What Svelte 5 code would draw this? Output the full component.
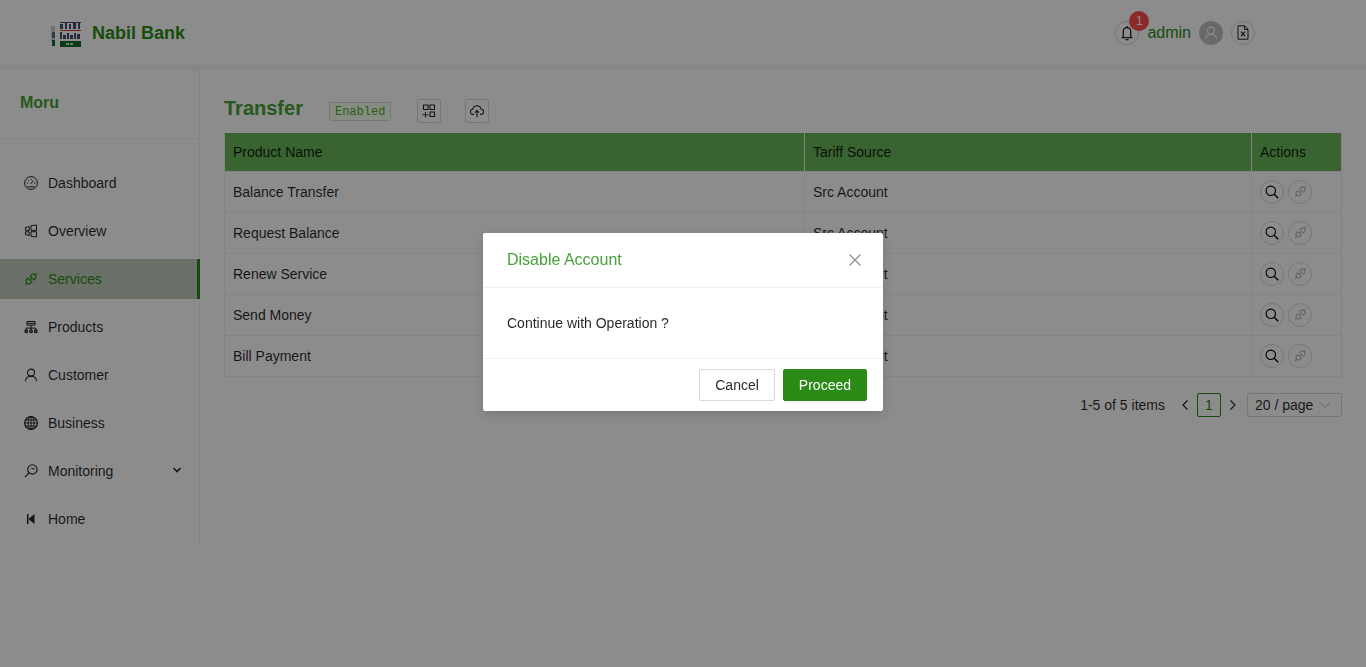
<script>
	const rows = [
		['Balance Transfer', 'Src Account'],
		['Request Balance', 'Src Account'],
		['Renew Service', 'Src Account'],
		['Send Money', 'Src Account'],
		['Bill Payment', 'Src Account']
	];

	const menu = [
		{ label: 'Dashboard', icon: 'dashboard' },
		{ label: 'Overview', icon: 'overview' },
		{ label: 'Services', icon: 'api', active: true },
		{ label: 'Products', icon: 'cluster' },
		{ label: 'Customer', icon: 'user' },
		{ label: 'Business', icon: 'globe' },
		{ label: 'Monitoring', icon: 'monitor', caret: true },
		{ label: 'Home', icon: 'home' }
	];
</script>

{#snippet api(size)}
	<svg width={size} height={size} viewBox="0 0 14 14" fill="none" stroke="currentColor" stroke-width="1.1">
		<g transform="rotate(45 7 7)">
			<path d="M7 -1.400V1.400M7 12.600V15.400M7 5.400V8.600" />
			<path d="M4.200 5.400V4.200a2.800 2.800 0 0 1 5.600 0v1.200z" />
			<path d="M4.200 8.600v1.200a2.800 2.800 0 0 0 5.600 0V8.600z" />
		</g>
	</svg>
{/snippet}

{#snippet search()}
	<svg width="14" height="14" viewBox="0 0 14 14" fill="none" stroke="#000" stroke-width="1.1">
		<circle cx="5.800" cy="5.800" r="4.700" />
		<path d="m9.200 9.200 4 4" stroke-width="1.300" />
	</svg>
{/snippet}

{#snippet icon(name)}
	{#if name === 'dashboard'}
		<svg width="14" height="14" viewBox="0 0 14 14" fill="none" stroke="currentColor" stroke-width="1">
			<circle cx="7" cy="7" r="6.400" />
			<path d="M3.400 10.800h7.200M6.600 8l2.600-3.400M2.800 7h1.300M9.900 7h1.300M7 2.800v1.300M4 4l.9.900" />
		</svg>
	{:else if name === 'overview'}
		<svg width="14" height="14" viewBox="0 0 14 14" fill="none" stroke="currentColor" stroke-width="1">
			<path d="M1.500 3.400 5.200 2.600v3.800H1.500zM1.500 7.800h3.700v3.600l-3.700-.8zM7 1.700l5.500-.7v5.300H7zM7 7.700h5.500v5.300L7 12.300z" />
		</svg>
	{:else if name === 'api'}
		{@render api(14)}
	{:else if name === 'cluster'}
		<svg width="14" height="14" viewBox="0 0 14 14" fill="none" stroke="currentColor" stroke-width="1">
			<path d="M3 1.500h8v3.600H3zM3 3.300h8M7 5.100v3M2.200 10V8.100h9.600V10M7 8.100V10" />
			<path d="M1 10h2.400v2.600H1zM5.800 10h2.400v2.600H5.800zM10.600 10H13v2.600h-2.400z" fill="currentColor" fill-opacity=".5" />
		</svg>
	{:else if name === 'user'}
		<svg width="14" height="14" viewBox="0 0 14 14" fill="none" stroke="currentColor" stroke-width="1.1">
			<circle cx="7" cy="4.600" r="3.500" />
			<path d="M1.400 13.200c.2-3 2.600-5.100 5.600-5.100s5.400 2.100 5.600 5.100" />
		</svg>
	{:else if name === 'globe'}
		<svg width="14" height="14" viewBox="0 0 14 14" fill="none" stroke="currentColor" stroke-width=".9">
			<circle cx="7" cy="7" r="6.400" stroke-width="1.200" />
			<ellipse cx="7" cy="7" rx="3" ry="6.400" />
			<path d="M7 .6v12.800M.6 7h12.800M1.400 4h11.200M1.400 10h11.200" />
		</svg>
	{:else if name === 'monitor'}
		<svg width="14" height="14" viewBox="0 0 14 14" fill="none" stroke="currentColor" stroke-width="1.100">
			<circle cx="8.400" cy="5.400" r="4.700" />
			<path d="M5 8.800 1 13M7.400 4l3 1.200" />
		</svg>
	{:else if name === 'home'}
		<svg width="14" height="14" viewBox="0 0 14 14" fill="currentColor">
			<path d="M3 2h1.500v10H3zM10.500 2v10L4.500 7z" />
		</svg>
	{/if}
{/snippet}

<div class="page">
	<header class="topbar">
		<div class="brand">
			<svg width="30" height="28" viewBox="0 0 30 28">
				<rect x="1" y="12" width="3" height="6" fill="#0c2c66" />
				<rect x="0" y="6" width="4" height="15" fill="#9aa0a8" opacity=".5" />
				<rect x="1" y="20" width="3" height="6" fill="#0e6b2a" />
				<path d="M9 2h21v1H9zM9 4h3v5H9zM14 3h2v6h-2zM18 4h2v5h-2zM22 3h3v6h-3zM27 3h2v6h-2z" fill="#16264f" opacity=".8" />
				<rect x="9" y="10" width="21" height="1" fill="#d2433a" />
				<path d="M9 12h2v7H9zM12 15h3v4h-3zM16 13h2v6h-2zM19 15h3v4h-3zM23 13h2v6h-2zM26 14h3v5h-3z" fill="#16264f" opacity=".8" />
				<rect x="9" y="21" width="21" height="6" fill="#0c6a2a" />
				<path d="M15 23h3v2h-3zM19 23h3v2h-3z" fill="#cfe3d4" />
			</svg>
			<span class="brand-name">Nabil Bank</span>
		</div>
		<div class="user">
			<span class="round">
				<svg width="14" height="16" viewBox="0 0 14 16" fill="none" stroke="#000" stroke-width="1.100">
					<path d="M1.500 12.800h11M3.200 12.800V6.400a3.800 3.800 0 0 1 7.600 0v6.400M7 1v1.400M5.400 14.800h3.200" />
				</svg>
				<span class="badge">1</span>
			</span>
			<span class="user-name">admin</span>
			<span class="avatar">
				<svg width="14" height="14" viewBox="0 0 14 14" fill="none" stroke="currentColor" stroke-width="1.100">
					<circle cx="7" cy="4.600" r="3.500" />
					<path d="M1.400 13.200c.2-3 2.600-5.100 5.600-5.100s5.400 2.100 5.600 5.100" />
				</svg>
			</span>
			<span class="round">
				<svg width="12" height="15" viewBox="0 0 12 15" fill="none" stroke="currentColor" stroke-width="1">
					<path d="M1 .8h6.600L11 4.200v10H1zM7.400.8v3.600H11" />
					<path d="m4 6.600 4 4.600m0-4.600-4 4.600" stroke-width="1.200" />
				</svg>
			</span>
		</div>
	</header>

	<div class="layout">
		<aside class="sidebar">
			<div class="side-title">Moru</div>
			<nav class="menu">
				{#each menu as item}
					<div class="menu-item" class:active={item.active}>
						<span class="menu-icon">{@render icon(item.icon)}</span>
						<span class="menu-label">{item.label}</span>
						{#if item.caret}
							<svg class="caret" width="10" height="10" viewBox="0 0 10 10" fill="none" stroke="currentColor" stroke-width="1.600">
								<path d="m1.500 3 3.500 3.500L8.500 3" />
							</svg>
						{/if}
					</div>
				{/each}
			</nav>
		</aside>

		<main class="content">
			<div class="title-row">
				<h1>Transfer</h1>
				<span class="tag">Enabled</span>
				<span class="square first">
					<svg width="14" height="14" viewBox="0 0 14 14" fill="none" stroke="currentColor" stroke-width="1.100">
						<path d="M1.500 1h4.500v4.500H1.500zM8 1h4.500v4.500H8zM8 8h4.500v4.500H8zM3.500 8v5.500M.5 10.800h6" />
					</svg>
				</span>
				<span class="square">
					<svg width="14" height="14" viewBox="0 0 14 14" fill="none" stroke="currentColor" stroke-width="1.100">
						<path d="M4 10.400H3.200A2.600 2.600 0 0 1 2.800 5.200 4.300 4.300 0 0 1 11.200 5.200 2.600 2.600 0 0 1 10.800 10.400H10" />
						<path d="M7 13V6.800M5 8.600l2-2 2 2" />
					</svg>
				</span>
			</div>

			<table>
				<thead>
					<tr>
						<th class="col-name">Product Name</th>
						<th class="col-src">Tariff Source</th>
						<th>Actions</th>
					</tr>
				</thead>
				<tbody>
					{#each rows as [name, source]}
						<tr>
							<td>{name}</td>
							<td>{source}</td>
							<td>
								<div class="actions">
									<span class="round">{@render search()}</span>
									<span class="round muted">{@render api(13)}</span>
								</div>
							</td>
						</tr>
					{/each}
				</tbody>
			</table>

			<div class="pager">
				<span class="total">1-5 of 5 items</span>
				<svg class="arrow" width="8" height="12" viewBox="0 0 8 12" fill="none" stroke="currentColor" stroke-width="1.200">
					<path d="M6.500 1.500 2 6l4.500 4.500" />
				</svg>
				<span class="page-no">1</span>
				<svg class="arrow" width="8" height="12" viewBox="0 0 8 12" fill="none" stroke="currentColor" stroke-width="1.200">
					<path d="M1.500 1.500 6 6l-4.500 4.500" />
				</svg>
				<span class="size">
					20 / page
					<svg width="12" height="8" viewBox="0 0 12 8" fill="none" stroke="#bfbfbf" stroke-width="1">
						<path d="m1 1.500 5 5 5-5" />
					</svg>
				</span>
			</div>
		</main>
	</div>
</div>

<div class="mask">
	<div class="modal">
		<div class="modal-head">
			<span class="modal-title">Disable Account</span>
			<svg width="14" height="14" viewBox="0 0 14 14" fill="none" stroke="#8c8c8c" stroke-width="1.100">
				<path d="m1.500 1.500 11 11m0-11-11 11" />
			</svg>
		</div>
		<div class="modal-body">Continue with Operation ?</div>
		<div class="modal-foot">
			<button class="btn">Cancel</button>
			<button class="btn primary">Proceed</button>
		</div>
	</div>
</div>

<style>
	:global(body) {
		margin: 0;
		background: #fff;
		font-family: "Liberation Sans", Arial, sans-serif;
		font-size: 14px;
		color: rgba(0, 0, 0, 0.85);
	}

	.page {
		height: 667px;
		overflow: hidden;
	}

	/* TOP BAR */
	.topbar {
		box-sizing: border-box;
		height: 70px;
		display: flex;
		align-items: center;
		justify-content: space-between;
		padding: 0 111px 0 51px;
		border-bottom: 5px solid #f0f2f5;
	}

	.brand {
		display: flex;
		align-items: center;
		gap: 11px;
		padding-top: 2px;
	}

	.brand-name {
		font-size: 18px;
		font-weight: 700;
		color: #2a8c17;
	}

	.user {
		display: flex;
		align-items: center;
		gap: 8px;
		font-size: 16px;
	}

	.user-name {
		color: #2a8c17;
	}

	.round {
		position: relative;
		box-sizing: border-box;
		width: 24px;
		height: 24px;
		display: flex;
		align-items: center;
		justify-content: center;
		border: 1px solid #d9d9d9;
		border-radius: 50%;
		color: rgba(0, 0, 0, 0.85);
		background: #fff;
	}

	.badge {
		position: absolute;
		top: -11px;
		left: 13px;
		width: 20px;
		height: 20px;
		border-radius: 50%;
		background: #ff4d4f;
		color: #fff;
		font-size: 12px;
		line-height: 20px;
		text-align: center;
	}

	.avatar {
		width: 24px;
		height: 24px;
		display: flex;
		align-items: center;
		justify-content: center;
		border-radius: 50%;
		background: #bfbfbf;
		color: #fff;
	}

	/* SIDEBAR */
	.layout {
		display: flex;
		align-items: flex-start;
	}

	.sidebar {
		box-sizing: border-box;
		width: 200px;
		height: 475px;
		flex-shrink: 0;
		border-right: 1px solid #f0f0f0;
	}

	.side-title {
		box-sizing: border-box;
		height: 69px;
		padding: 24px 20px 0;
		font-size: 16px;
		font-weight: 700;
		color: #47a138;
		border-bottom: 1px solid #f0f0f0;
	}

	.menu {
		display: flex;
		flex-direction: column;
		gap: 8px;
		padding-top: 24px;
		margin-right: -1px;
	}

	.menu-item {
		box-sizing: border-box;
		height: 40px;
		display: flex;
		align-items: center;
		gap: 10px;
		padding-left: 24px;
	}

	.menu-icon {
		display: flex;
		width: 14px;
	}

	.menu-label {
		flex: 1;
	}

	.caret {
		margin: -3px 18px 0 0;
	}

	.menu-item.active {
		background: #c1cdbd;
		color: #2a8c17;
		border-right: 3px solid #2a8c17;
	}

	/* CONTENT */
	.content {
		flex: 1;
		padding: 26px 24px 0;
		min-width: 0;
	}

	.title-row {
		height: 37px;
		display: flex;
		align-items: flex-start;
	}

	h1 {
		margin: 1px 26px 0 0;
		font-size: 20px;
		line-height: 23px;
		font-weight: 700;
		color: #47a138;
	}

	.tag {
		box-sizing: border-box;
		height: 19px;
		margin: 6px 26px 0 0;
		padding: 1px 5px 0;
		display: flex;
		align-items: center;
		font-family: "Liberation Mono", monospace;
		font-size: 12px;
		color: #4db01f;
		background: #f6ffed;
		border: 1px solid #d9d9d9;
		border-radius: 2px;
	}

	.square {
		box-sizing: border-box;
		width: 24px;
		height: 24px;
		margin-top: 3px;
		display: flex;
		align-items: center;
		justify-content: center;
		border: 1px solid #d9d9d9;
		border-radius: 2px;
		color: rgba(0, 0, 0, 0.85);
		background: #fff;
	}

	.square.first {
		margin-right: 24px;
	}

	table {
		width: 1118px;
		border-collapse: collapse;
		table-layout: fixed;
		border: 1px solid #f0f0f0;
		border-top: 0;
	}

	th {
		box-sizing: border-box;
		height: 38px;
		padding: 0 8px;
		text-align: left;
		font-weight: 400;
		background: #68b558;
		border-right: 1px solid #f0f0f0;
		border-bottom: 1px solid #f0f0f0;
	}

	th:last-child {
		border-right: 0;
	}

	.col-name {
		width: 580px;
	}

	.col-src {
		width: 447px;
	}

	td {
		box-sizing: border-box;
		height: 41px;
		padding: 0 8px;
		border-right: 1px solid #f0f0f0;
		border-bottom: 1px solid #f0f0f0;
	}

	.actions {
		display: flex;
		gap: 4px;
	}

	.round.muted {
		color: #b5b5b5;
		background: transparent;
	}

	/* PAGINATION */
	.pager {
		display: flex;
		align-items: center;
		justify-content: flex-end;
		margin-top: 16px;
		height: 24px;
	}

	.total {
		margin-right: 16px;
	}

	.page-no {
		box-sizing: border-box;
		width: 24px;
		height: 24px;
		margin: 0 8px;
		text-align: center;
		line-height: 22px;
		color: #2a8c17;
		border: 1px solid #2a8c17;
		border-radius: 2px;
	}

	.arrow {
		flex-shrink: 0;
	}

	.size {
		box-sizing: border-box;
		width: 95px;
		height: 24px;
		margin-left: 10px;
		padding: 0 10px 0 7px;
		display: flex;
		align-items: center;
		justify-content: space-between;
		border: 1px solid #d9d9d9;
		border-radius: 2px;
	}

	/* MODAL */
	.mask {
		position: fixed;
		inset: 0;
		display: flex;
		justify-content: center;
		align-items: flex-start;
		padding-top: 233px;
		background: rgba(0, 0, 0, 0.45);
	}

	.modal {
		width: 400px;
		background: #fff;
		border-radius: 2px;
		box-shadow: 0 4px 12px rgba(0, 0, 0, 0.15);
	}

	.modal-head {
		box-sizing: border-box;
		height: 55px;
		display: flex;
		align-items: center;
		justify-content: space-between;
		padding: 0 21px 0 24px;
		border-bottom: 1px solid #f0f0f0;
	}

	.modal-title {
		font-size: 16px;
		color: #47a138;
	}

	.modal-body {
		box-sizing: border-box;
		height: 70px;
		padding: 27px 24px 0;
		line-height: 16px;
	}

	.modal-foot {
		box-sizing: border-box;
		height: 53px;
		display: flex;
		justify-content: flex-end;
		gap: 8px;
		padding: 10px 16px;
		border-top: 1px solid #f0f0f0;
	}

	.btn {
		height: 32px;
		padding: 0 15px;
		font: inherit;
		color: rgba(0, 0, 0, 0.85);
		background: #fff;
		border: 1px solid #d9d9d9;
		border-radius: 2px;
	}

	.btn.primary {
		color: #fff;
		background: #2a8c17;
		border-color: #2a8c17;
	}
</style>
